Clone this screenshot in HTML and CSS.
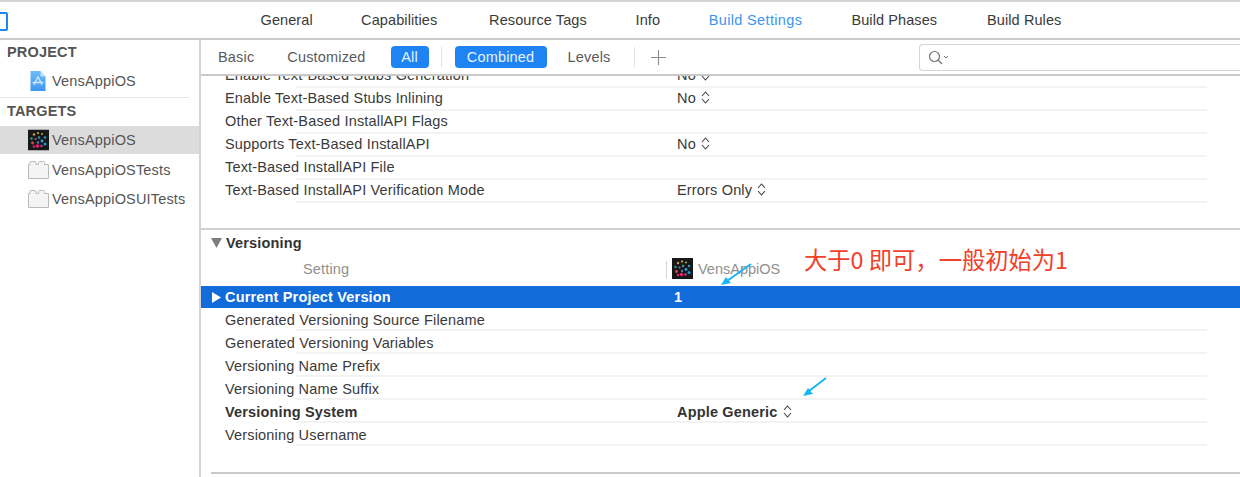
FILE: index.html
```html
<!DOCTYPE html>
<html lang="en">
<head>
<meta charset="utf-8">
<title>Build Settings</title>
<link rel="stylesheet" href="styles.css">
</head>
<body>
<div class="app">
  <header class="tabs">
    <span class="nav-toggle"></span>
    <nav class="tab-list">
      <span class="tab t1">General</span>
      <span class="tab t2">Capabilities</span>
      <span class="tab t3">Resource Tags</span>
      <span class="tab t4">Info</span>
      <span class="tab t5 active">Build Settings</span>
      <span class="tab t6">Build Phases</span>
      <span class="tab t7">Build Rules</span>
    </nav>
  </header>
  <div class="main">
    <aside class="sidebar">
      <div class="side-head">PROJECT</div>
      <div class="side-item project">
        <svg class="ico" width="16" height="20" viewBox="0 0 16 20"><defs><linearGradient id="doc" x1="0" y1="0" x2="0" y2="1"><stop offset="0" stop-color="#6cbcf8"/><stop offset="1" stop-color="#3f97ee"/></linearGradient></defs><path d="M.5 0h10l5 5.500V20H.5z" fill="url(#doc)"/><path d="M10.500 0l5 5.500h-5z" fill="#c4e2fa"/><path d="M8 5.500l4 8.500M8 5.500L4 14M2.500 11.500h11" stroke="#cfe7fb" stroke-width="1.300" fill="none"/></svg>
        <span>VensAppiOS</span>
      </div>
      <div class="side-sep"></div>
      <div class="side-head targets">TARGETS</div>
      <div class="side-item selected">
        <svg class="ico" width="21" height="21" viewBox="0 0 21 21"><rect width="21" height="21" fill="#16181a"/><circle cx="10" cy="3.500" r="1.100" fill="#d2b13f"/><circle cx="14" cy="4.500" r="1.100" fill="#a6a83f"/><circle cx="6" cy="5" r="1.200" fill="#d0a63a"/><circle cx="17" cy="8" r="1.200" fill="#2f9ec9"/><circle cx="3.500" cy="9" r="1.200" fill="#3f9f6f"/><circle cx="11" cy="8" r="1.300" fill="#3e8f9f"/><circle cx="7.500" cy="9.500" r="1.100" fill="#8a6aaa"/><circle cx="14" cy="11.500" r="1.400" fill="#2fa0d8"/><circle cx="4.500" cy="13.500" r="1.400" fill="#e04a50"/><circle cx="10" cy="13" r="1.200" fill="#5a7fb0"/><circle cx="9.500" cy="16.500" r="1.800" fill="#e8206f"/><circle cx="6" cy="17" r="1.300" fill="#d92a6a"/><circle cx="13.500" cy="16.500" r="1.300" fill="#c7358a"/><circle cx="17" cy="14.500" r="1.500" fill="#189bdc"/></svg>
        <span>VensAppiOS</span>
      </div>
      <div class="side-item">
        <svg class="ico" width="21" height="18" viewBox="0 0 21 18"><path d="M.5 17.500V3.500H2V1.500a1 1 0 0 1 1-1h4a1 1 0 0 1 1 1v2h2.500V1.500a1 1 0 0 1 1-1h4a1 1 0 0 1 1 1v2h4v14z" fill="#f4f4f4" stroke="#b9b9b9"/></svg>
        <span>VensAppiOSTests</span>
      </div>
      <div class="side-item">
        <svg class="ico" width="21" height="18" viewBox="0 0 21 18"><path d="M.5 17.500V3.500H2V1.500a1 1 0 0 1 1-1h4a1 1 0 0 1 1 1v2h2.500V1.500a1 1 0 0 1 1-1h4a1 1 0 0 1 1 1v2h4v14z" fill="#f4f4f4" stroke="#b9b9b9"/></svg>
        <span>VensAppiOSUITests</span>
      </div>
    </aside>
    <section class="content">
      <div class="filter">
        <span class="f-btn basic">Basic</span>
        <span class="f-btn custom">Customized</span>
        <span class="f-btn on all">All</span>
        <span class="f-div d1"></span>
        <span class="f-btn on combined">Combined</span>
        <span class="f-btn levels">Levels</span>
        <span class="f-div d2"></span>
        <svg class="plus" width="15" height="15" viewBox="0 0 15 15"><path d="M7.500 0v15M0 7.500h15" stroke="#8b8b8b" stroke-width="1.100"/></svg>
        <div class="search">
          <svg width="22" height="15" viewBox="0 0 22 15"><circle cx="6.500" cy="6.500" r="5" fill="none" stroke="#777" stroke-width="1.200"/><path d="M10 10l4 4" stroke="#777" stroke-width="1.300"/><path d="M16 6l2 2 2-2" fill="none" stroke="#777" stroke-width="1"/></svg>
        </div>
      </div>
      <div class="scroll">
        <div class="settings">
          <div class="row"><span class="name">Enable Text-Based Stubs Generation</span><span class="val">No<svg class="updown" width="9" height="13" viewBox="0 0 9 13"><path d="M1 5l3.500-4L8 5M1 8l3.500 4L8 8" fill="none" stroke="#444" stroke-width="1.100"/></svg></span></div>
          <div class="row"><span class="name">Enable Text-Based Stubs Inlining</span><span class="val">No<svg class="updown" width="9" height="13" viewBox="0 0 9 13"><path d="M1 5l3.500-4L8 5M1 8l3.500 4L8 8" fill="none" stroke="#444" stroke-width="1.100"/></svg></span></div>
          <div class="row"><span class="name">Other Text-Based InstallAPI Flags</span></div>
          <div class="row"><span class="name">Supports Text-Based InstallAPI</span><span class="val">No<svg class="updown" width="9" height="13" viewBox="0 0 9 13"><path d="M1 5l3.500-4L8 5M1 8l3.500 4L8 8" fill="none" stroke="#444" stroke-width="1.100"/></svg></span></div>
          <div class="row"><span class="name">Text-Based InstallAPI File</span></div>
          <div class="row"><span class="name">Text-Based InstallAPI Verification Mode</span><span class="val">Errors Only<svg class="updown" width="9" height="13" viewBox="0 0 9 13"><path d="M1 5l3.500-4L8 5M1 8l3.500 4L8 8" fill="none" stroke="#444" stroke-width="1.100"/></svg></span></div>
        </div>
        <div class="section">
          <div class="sec-title"><svg width="11" height="10" viewBox="0 0 11 10"><path d="M0 0h11L5.500 10z" fill="#7d7d7d"/></svg><span>Versioning</span></div>
          <div class="sec-cols">
            <span class="col-setting">Setting</span>
            <span class="col-div"></span>
            <svg class="col-ico" width="21" height="21" viewBox="0 0 21 21"><rect width="21" height="21" fill="#16181a"/><circle cx="10" cy="3.500" r="1.100" fill="#d2b13f"/><circle cx="14" cy="4.500" r="1.100" fill="#a6a83f"/><circle cx="6" cy="5" r="1.200" fill="#d0a63a"/><circle cx="17" cy="8" r="1.200" fill="#2f9ec9"/><circle cx="3.500" cy="9" r="1.200" fill="#3f9f6f"/><circle cx="11" cy="8" r="1.300" fill="#3e8f9f"/><circle cx="7.500" cy="9.500" r="1.100" fill="#8a6aaa"/><circle cx="14" cy="11.500" r="1.400" fill="#2fa0d8"/><circle cx="4.500" cy="13.500" r="1.400" fill="#e04a50"/><circle cx="10" cy="13" r="1.200" fill="#5a7fb0"/><circle cx="9.500" cy="16.500" r="1.800" fill="#e8206f"/><circle cx="6" cy="17" r="1.300" fill="#d92a6a"/><circle cx="13.500" cy="16.500" r="1.300" fill="#c7358a"/><circle cx="17" cy="14.500" r="1.500" fill="#189bdc"/></svg>
            <span class="col-name">VensAppiOS</span>
          </div>
          <div class="row selected-row"><svg class="disc" width="9" height="11" viewBox="0 0 9 11"><path d="M0 0l9 5.500L0 11z" fill="#fff"/></svg><span class="name">Current Project Version</span><span class="val">1</span></div>
          <div class="row"><span class="name">Generated Versioning Source Filename</span></div>
          <div class="row"><span class="name">Generated Versioning Variables</span></div>
          <div class="row"><span class="name">Versioning Name Prefix</span></div>
          <div class="row"><span class="name">Versioning Name Suffix</span></div>
          <div class="row strong"><span class="name">Versioning System</span><span class="val">Apple Generic<svg class="updown" width="9" height="13" viewBox="0 0 9 13"><path d="M1 5l3.500-4L8 5M1 8l3.500 4L8 8" fill="none" stroke="#444" stroke-width="1.100"/></svg></span></div>
          <div class="row"><span class="name">Versioning Username</span></div>
        </div>
        <div class="end-rule"></div>
      </div>
    </section>
  </div>
</div>
<div class="note">大于0 即可，一般初始为1</div>
<svg class="arrow a1" width="34" height="24" viewBox="0 0 34 24"><path d="M31 2L7 19" stroke="#19b5f5" stroke-width="2"/><path d="M1 23l10-2-5-6z" fill="#19b5f5"/></svg>
<svg class="arrow a2" width="26" height="20" viewBox="0 0 26 20"><path d="M24 1L7 14" stroke="#19b5f5" stroke-width="2"/><path d="M1 19l10-2-5-6z" fill="#19b5f5"/></svg>
</body>
</html>
```
FILE: styles.css
```css
* { box-sizing: border-box; }
html, body { margin: 0; height: 477px; overflow: hidden; background: #fff; }
body { position: relative; font-family: "Liberation Sans", Arial, sans-serif; font-size: 14.500px; letter-spacing: .17px; color: #3a3a3a; }
.app { width: 1240px; height: 477px; display: flex; flex-direction: column; }

.tabs { height: 40px; flex: none; position: relative; border-top: 2px solid #d4d4d4; border-bottom: 2px solid #c9c9c9; }
.nav-toggle { position: absolute; left: -8px; top: 10px; width: 16px; height: 19px; border: 2px solid #1f87f5; border-radius: 2px; }
.tab-list { display: flex; height: 100%; align-items: center; padding-left: 260.500px; padding-bottom: 1px; letter-spacing: .1px; }
.tab { color: #3a3a3a; }
.t1 { margin-right: 48.300px; }
.t2 { margin-right: 51.800px; }
.t3 { margin-right: 48.700px; }
.t4 { margin-right: 48.600px; }
.t5 { margin-right: 49.100px; letter-spacing: .35px; }
.t6 { margin-right: 49.800px; }
.active { color: #3b96ef; }

.main { flex: 1; display: flex; min-height: 0; }
.sidebar { width: 201px; flex: none; border-right: 2px solid #d3d3d3; }
.side-head { font-weight: 700; color: #555; height: 25px; line-height: 25px; padding-left: 7px; }
.side-head.targets { height: 28px; line-height: 26px; }
.side-item { height: 29px; display: flex; align-items: center; color: #555; position: relative; padding-left: 52px; }
.side-item .ico { position: absolute; left: 28px; top: 50%; transform: translateY(-50%); }
.side-item.project { height: 32px; }
.side-item.project .ico { left: 30px; }
.side-item.selected { background: #dcdcdc; height: 28px; margin-bottom: 1px; }
.side-sep { height: 1px; background: #e6e6e6; width: 189px; }

.content { flex: 1; min-width: 0; display: flex; flex-direction: column; }
.filter { height: 36px; flex: none; position: relative; display: flex; align-items: center; border-bottom: 2px solid #c9c9c9; }
.f-btn { color: #5a5a5a; }
.f-btn.on { background: #1f84f3; color: #e6f2fe; border-radius: 4px; height: 22px; line-height: 22px; text-align: center; }
.basic { margin-left: 17px; }
.custom { margin-left: 33px; }
.all { width: 38px; margin-left: 25px; }
.f-div { width: 1px; height: 20px; background: #e2e2e2; }
.d1 { margin-left: 12.500px; }
.combined { width: 92px; margin-left: 12.500px; }
.levels { margin-left: 21px; }
.d2 { margin-left: 23px; }
.plus { margin-left: 16px; }
.search { position: absolute; left: 718px; top: 4px; width: 340px; height: 27px; border: 1px solid #d4d4d4; border-right: 0; border-radius: 4px 0 0 4px; padding: 5px 0 0 8px; }
.search svg { display: block; }

.scroll { flex: 1; min-height: 0; overflow: hidden; }
.settings { margin-top: -12px; }
.settings .row { padding-bottom: 2px; }
.row { height: 23px; display: flex; align-items: center; position: relative; margin-left: 10px; width: 996px; }
.row::after { content: ""; position: absolute; left: 85px; right: 0; bottom: -1px; height: 2px; background: #f3f3f3; }
.name { position: absolute; left: 14px; color: #3a3a3a; white-space: nowrap; }
.val { position: absolute; left: 466px; color: #3a3a3a; display: flex; align-items: center; white-space: nowrap; }
.updown { margin-left: 5px; }
.section { margin-top: 26px; border-top: 2px solid #cfcfcf; }
.section .row { padding-top: 2px; }
.sec-title { height: 26px; display: flex; align-items: center; margin-left: 10px; font-weight: 700; color: #333; }
.sec-title span { margin-left: 4px; }
.sec-cols { height: 30px; padding-bottom: 4px; display: flex; align-items: center; position: relative; }
.col-setting { margin-left: 102px; color: #8f8f8f; }
.col-div { position: absolute; left: 465px; top: 5px; width: 1px; height: 18px; background: #d6d6d6; }
.col-ico { position: absolute; left: 471px; top: 2px; }
.col-name { position: absolute; left: 497px; color: #8f8f8f; letter-spacing: 0; }
.section .selected-row { background: #116bd8; margin: 0 0 -1px; width: auto; height: 22px; padding-top: 0; }
.selected-row::after { display: none; }
.selected-row .name { left: 24px; color: #fff; font-weight: 700; }
.selected-row .val { left: 473px; color: #fff; font-weight: 700; }
.disc { margin-left: 10.500px; }
.strong .name, .strong .val { font-weight: 700; color: #333; }
.end-rule { margin: 27px 0 0 10px; height: 2px; background: #c9c9c9; }

.note { position: absolute; left: 804px; top: 244px; color: #f0412a; font-family: "Noto Sans CJK SC", sans-serif; font-size: 23.300px; letter-spacing: 0; line-height: 30px; white-space: nowrap; }
.arrow { position: absolute; }
.a1 { left: 720px; top: 262px; }
.a2 { left: 802px; top: 377px; }
```
